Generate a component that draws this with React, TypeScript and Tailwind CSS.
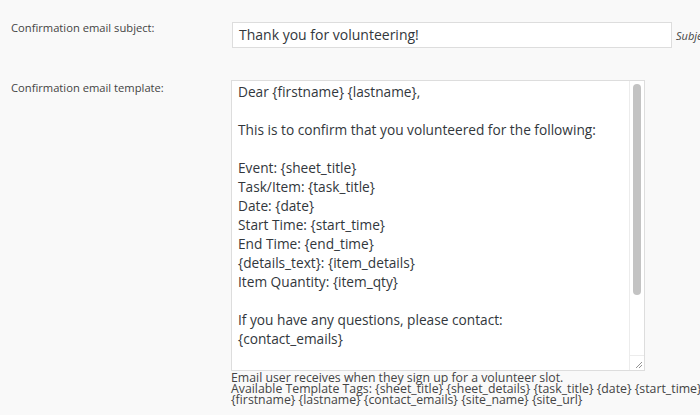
import React from "react";

const lines = [
  "Dear {firstname} {lastname},",
  "",
  "This is to confirm that you volunteered for the following:",
  "",
  "Event: {sheet_title}",
  "Task/Item: {task_title}",
  "Date: {date}",
  "Start Time: {start_time}",
  "End Time: {end_time}",
  "{details_text}: {item_details}",
  "Item Quantity: {item_qty}",
  "",
  "If you have any questions, please contact:",
  "{contact_emails}",
];

export default function App() {
  return (
    <div
      className="w-[700px] h-[415px] overflow-hidden bg-[#f9f9f9] text-[#32373c] pt-[19px] pl-[11px]"
      style={{ fontFamily: '"Open Sans", "Noto Sans", sans-serif' }}
    >
      <div className="flex items-start">
        <div className="w-[221px] shrink-0 text-[11.2px] leading-[17px] text-[#444]">
          Confirmation email subject:
        </div>
        <div className="mt-[3px] w-[440px] h-[26px] shrink-0 bg-white border border-[#dddddd] px-[6px] text-[14px] leading-[24px] text-[#32373c]">
          Thank you for volunteering!
        </div>
        <div className="mt-[9px] ml-[4px] text-[11px] italic whitespace-nowrap text-[#444]">
          Subject of the email
        </div>
      </div>

      <div className="flex items-start mt-[32px]">
        <div className="w-[220px] shrink-0 text-[11.2px] leading-[17px] text-[#444] mt-[-1px]">
          Confirmation email template:
        </div>
        <div className="flex flex-col shrink-0">
          <div className="flex w-[414px] h-[291px] bg-white border border-[#dddddd]">
            <div className="flex-1 pt-[1px] pl-[6px] text-[13.7px] leading-[19px] whitespace-pre overflow-hidden">
              {lines.map((l, i) => (
                <div key={i} className="h-[19px]">
                  {l}
                </div>
              ))}
            </div>
            <div className="w-[15px] shrink-0 border-l border-[#ececec] flex flex-col">
              <div className="flex-1 pt-[3px] flex justify-center">
                <div className="w-[8px] h-[211px] rounded-full bg-[#c3c3c3]" />
              </div>
              <div className="h-[15px] border-t border-[#ececec] flex items-end justify-end pr-[1px] pb-[1px]">
                <svg width="8" height="8" viewBox="0 0 8 8">
                  <line x1="1" y1="7" x2="7" y2="1" stroke="#777" strokeWidth="0.8" />
                  <line x1="4" y1="7" x2="7" y2="4" stroke="#777" strokeWidth="0.8" />
                </svg>
              </div>
            </div>
          </div>
          <div className="text-[12.3px] leading-[10.8px] pt-[2px] text-[#444] whitespace-nowrap">
            <div>Email user receives when they sign up for a volunteer slot.</div>
            <div>
              Available Template Tags: {"{sheet_title} {sheet_details} {task_title} {date} {start_time} {end_time} {details_text} {item_details}"}
            </div>
            <div>{"{firstname} {lastname} {contact_emails} {site_name} {site_url}"}</div>
          </div>
        </div>
      </div>
    </div>
  );
}
